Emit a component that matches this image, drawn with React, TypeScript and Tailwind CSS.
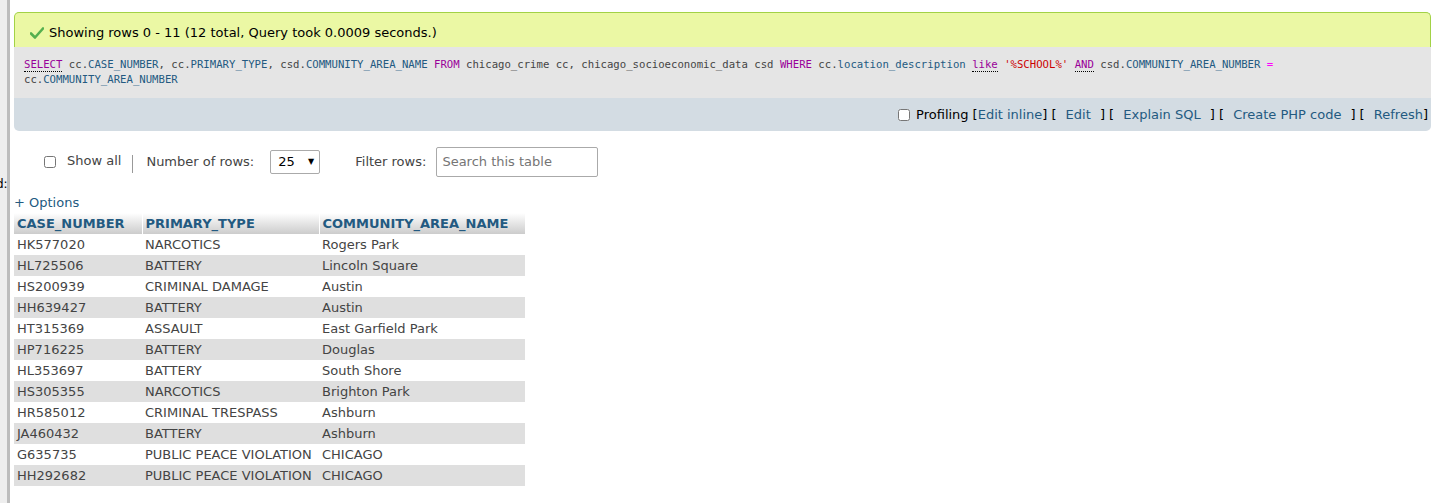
import React from "react"

const rows = [
  ["HK577020", "NARCOTICS", "Rogers Park"],
  ["HL725506", "BATTERY", "Lincoln Square"],
  ["HS200939", "CRIMINAL DAMAGE", "Austin"],
  ["HH639427", "BATTERY", "Austin"],
  ["HT315369", "ASSAULT", "East Garfield Park"],
  ["HP716225", "BATTERY", "Douglas"],
  ["HL353697", "BATTERY", "South Shore"],
  ["HS305355", "NARCOTICS", "Brighton Park"],
  ["HR585012", "CRIMINAL TRESPASS", "Ashburn"],
  ["JA460432", "BATTERY", "Ashburn"],
  ["G635735", "PUBLIC PEACE VIOLATION", "CHICAGO"],
  ["HH292682", "PUBLIC PEACE VIOLATION", "CHICAGO"],
]

function Kw({ children, dotted }: { children: React.ReactNode; dotted?: boolean }) {
  return (
    <span className={"text-[#990099] " + (dotted ? "border-b border-dotted border-black" : "")}>{children}</span>
  )
}

function Col({ children }: { children: React.ReactNode }) {
  return <span className="text-[#235a81]">{children}</span>
}

function Check() {
  return (
    <svg width="14" height="12" viewBox="0 0 14 12" className="mr-[5px]">
      <path d="M1 6.5 L5 10.5 L13 1.5" fill="none" stroke="#55b04f" strokeWidth="2.6" strokeLinecap="round" strokeLinejoin="round" />
    </svg>
  )
}

function Bracket({ children, pl, pr }: { children: React.ReactNode; pl?: boolean; pr?: boolean }) {
  return (
    <span>
      [{pl ? " " : ""}
      <a className={"text-[#235a81] " + (pl ? "pl-[5px] " : "") + (pr ? "pr-[5px]" : "")}>{children}</a>
      {pr ? " " : ""}]
    </span>
  )
}

export default function App() {
  return (
    <div className="flex min-h-[503px] bg-white font-['DejaVu_Sans',sans-serif] text-[13px] text-[#444]">
      <aside className="relative w-[10px] shrink-0 overflow-hidden border-r-[3px] border-[#bdbdbd] bg-[#eeeeee]">
        <span className="absolute left-[-4px] top-[175px] text-[12px] text-black">d:</span>
      </aside>

      <main className="flex-1 pl-[4px] pr-[6px] pt-[12px]">
        <div className="flex h-[35px] items-center rounded-t-[5px] border border-b-0 border-[#a2d246] bg-[#ebf8a4] pl-[15px] pt-[5px] text-[13px] text-black">
          <Check />
          Showing rows 0 - 11 (12 total, Query took 0.0009 seconds.)
        </div>
        <div className="h-[51px] bg-[#e5e5e5] px-[10px] pt-[10px] font-['DejaVu_Sans_Mono',monospace] text-[10.65px] leading-[15px] text-[#444]">
          <Kw dotted>SELECT</Kw> cc.<Col>CASE_NUMBER</Col>, cc.<Col>PRIMARY_TYPE</Col>, csd.<Col>COMMUNITY_AREA_NAME</Col>{" "}
          <Kw>FROM</Kw> chicago_crime cc, chicago_socioeconomic_data csd <Kw>WHERE</Kw> cc.<Col>location_description</Col>{" "}
          <Kw dotted>like</Kw> <span className="text-[#cc0000]">'%SCHOOL%'</span> <Kw dotted>AND</Kw> csd.
          <Col>COMMUNITY_AREA_NUMBER</Col> <span className="text-[#ff00ff]">=</span>
          <br />
          cc.<Col>COMMUNITY_AREA_NUMBER</Col>
        </div>
        <div className="flex h-[33px] items-center justify-end rounded-b-[5px] bg-[#d3dce3] pr-[3px] text-[13px] text-black">
          <input type="checkbox" className="mr-[6px] h-[12px] w-[12px]" />
          <span className="mr-[4px]">Profiling</span>
          <Bracket>Edit inline</Bracket>
          <span className="ml-[4px]"><Bracket pl pr>Edit</Bracket></span>
          <span className="ml-[4px]"><Bracket pl pr>Explain SQL</Bracket></span>
          <span className="ml-[4px]"><Bracket pl pr>Create PHP code</Bracket></span>
          <span className="ml-[4px]"><Bracket pl>Refresh</Bracket></span>
        </div>

        <div className="mt-[16px] flex h-[30px] items-center pl-[30px]">
          <input type="checkbox" className="h-[12px] w-[12px]" />
          <span className="ml-[11px] self-start pt-[4px]">Show all</span>
          <span className="ml-[11px] mr-[13px] mt-[4px] h-[18px] w-px bg-[#999]" />
          <span>Number of rows:</span>
          <div className="ml-[16px] flex h-[24px] w-[50px] items-center justify-between rounded-[2px] border border-[#aaa] pl-[7px] pr-[5px] text-black">
            <span>25</span>
            <span className="text-[8px]">▼</span>
          </div>
          <span className="ml-[35px]">Filter rows:</span>
          <div className="ml-[10px] flex h-[30px] w-[162px] items-center rounded-[2px] border border-[#aaa] pl-[5px] text-[#757575]">
            Search this table
          </div>
        </div>

        <div className="mt-[18px] leading-[16px] text-[#235a81]">+ Options</div>

        <table className="mt-[2px] border-collapse">
          <thead>
            <tr className="h-[21px] bg-gradient-to-b from-white to-[#cccccc] text-left font-bold text-[#235a81]">
              <th className="w-[128px] border-r border-white py-0 pl-[3px] pr-0 font-bold">CASE_NUMBER</th>
              <th className="w-[177px] border-r border-white py-0 pl-[3px] pr-0 font-bold">PRIMARY_TYPE</th>
              <th className="w-[206px] py-0 pl-[3px] pr-0 font-bold">COMMUNITY_AREA_NAME</th>
            </tr>
          </thead>
          <tbody>
            {rows.map((r, i) => (
              <tr key={r[0]} className={"h-[21px] " + (i % 2 ? "bg-[#dfdfdf]" : "bg-white")}>
                {r.map((c, j) => (
                  <td key={j} className="whitespace-nowrap py-0 pl-[3px] pr-0">{c}</td>
                ))}
              </tr>
            ))}
          </tbody>
        </table>
      </main>
    </div>
  )
}
